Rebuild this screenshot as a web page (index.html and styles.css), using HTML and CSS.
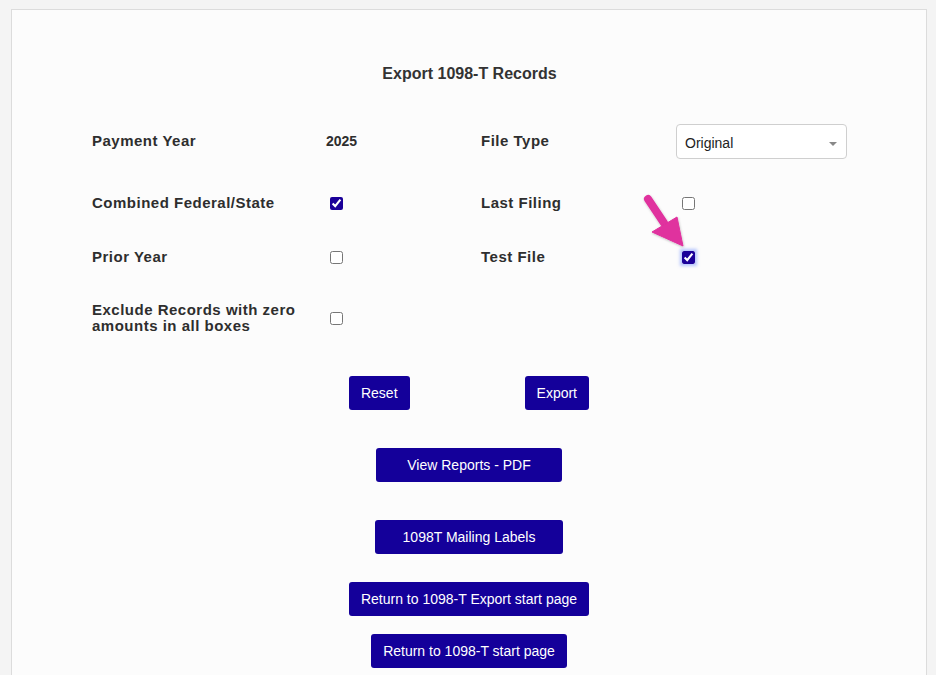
FILE: index.html
```html
<!DOCTYPE html>
<html lang="en">
<head>
<meta charset="utf-8">
<title>Export 1098-T Records</title>
<link rel="stylesheet" href="styles.css">
</head>
<body>
<div class="card">
  <h1 class="title">Export 1098-T Records</h1>
  <div class="form">
    <div class="label">Payment Year</div>
    <div class="value">2025</div>
    <div class="label">File Type</div>
    <div class="value">
      <div class="select-wrap">
        <select class="select"><option>Original</option></select>
      </div>
    </div>

    <div class="label">Combined Federal/State</div>
    <div class="value"><input type="checkbox" class="check" checked></div>
    <div class="label">Last Filing</div>
    <div class="value"><input type="checkbox" class="check"></div>

    <div class="label">Prior Year</div>
    <div class="value"><input type="checkbox" class="check"></div>
    <div class="label">Test File</div>
    <div class="value"><input type="checkbox" class="check check-focus" checked></div>

    <div class="label">Exclude Records with zero amounts in all boxes</div>
    <div class="value"><input type="checkbox" class="check"></div>
    <div></div>
    <div></div>
  </div>

  <div class="actions">
    <div class="pair">
      <button class="btn">Reset</button>
      <button class="btn">Export</button>
    </div>
    <button class="btn btn-reports">View Reports - PDF</button>
    <button class="btn btn-labels">1098T Mailing Labels</button>
    <button class="btn btn-return">Return to 1098-T Export start page</button>
    <button class="btn btn-start">Return to 1098-T start page</button>
  </div>

  <svg class="pointer" width="50" height="60" viewBox="0 0 50 60" aria-hidden="true">
    <defs>
      <filter id="sh" x="-30%" y="-30%" width="160%" height="160%">
        <feDropShadow dx="0.5" dy="1" stdDeviation="1" flood-color="#000" flood-opacity="0.25"/>
      </filter>
    </defs>
    <g filter="url(#sh)" fill="#e0309e" stroke="#e0309e">
      <line x1="6" y1="7" x2="22" y2="31" stroke-width="8" stroke-linecap="round"/>
      <polygon points="10,40 35,25 41,54" stroke-width="1" stroke-linejoin="round"/>
    </g>
  </svg>
</div>
</body>
</html>
```

FILE: styles.css
```css
html, body {
  margin: 0;
  padding: 0;
  background: #f4f4f4;
  font-family: "Liberation Sans", Arial, sans-serif;
  color: #333;
}

.card {
  position: relative;
  box-sizing: border-box;
  width: 916px;
  min-height: 700px;
  margin: 9px 0 0 11px;
  background: #fcfcfc;
  border: 1px solid #dcdcdc;
  padding: 56px 0 40px 0;
}

.title {
  margin: 0;
  text-align: center;
  font-size: 16px;
  line-height: 16px;
  font-weight: bold;
  color: #333;
  padding-left: 1px;
}

.form {
  display: grid;
  grid-template-columns: 234px 155px 197px 171px;
  grid-template-rows: 62px 62px 46px 76px;
  margin: 28px 0 0 80px;
  align-items: center;
}

.label {
  font-size: 15px;
  line-height: 16px;
  font-weight: bold;
  letter-spacing: 0.5px;
  color: #2e2e2e;
}

.form > .label:nth-child(4n+1) {
  padding-right: 20px;
}

.value {
  font-size: 14px;
  font-weight: bold;
  line-height: 16px;
  display: flex;
  align-items: center;
  color: #2e2e2e;
}

.check {
  width: 13px;
  height: 13px;
  margin: 0 0 0 4px;
  accent-color: #1a0099;
}

.check-focus {
  box-shadow: 0 0 3px 2px rgba(120, 150, 255, 0.55);
  border-radius: 2px;
}

.select-wrap {
  position: relative;
  margin-left: -2px;
}

.select-wrap::after {
  content: "";
  position: absolute;
  right: 10px;
  top: 18px;
  border-left: 4px solid transparent;
  border-right: 4px solid transparent;
  border-top: 4px solid #888;
}

.select {
  appearance: none;
  -webkit-appearance: none;
  box-sizing: border-box;
  width: 171px;
  height: 35px;
  padding: 4px 24px 0 8px;
  background: #fff;
  border: 1px solid #cfcfcf;
  border-radius: 4px;
  font-family: "Liberation Sans", Arial, sans-serif;
  font-size: 14px;
  font-weight: normal;
  color: #222;
}

.actions {
  display: flex;
  flex-direction: column;
  align-items: center;
  margin-top: 20px;
}

.pair {
  display: flex;
  gap: 115px;
}

.btn {
  box-sizing: border-box;
  height: 34px;
  padding: 0 12px;
  background: #14009a;
  color: #fff;
  border: none;
  border-radius: 3px;
  font-family: "Liberation Sans", Arial, sans-serif;
  font-size: 14px;
  white-space: nowrap;
  cursor: pointer;
}

.btn-reports {
  width: 186px;
  margin-top: 38px;
}

.btn-labels {
  width: 188px;
  margin-top: 38px;
}

.btn-return {
  min-width: 240px;
  margin-top: 28px;
}

.btn-start {
  min-width: 196px;
  margin-top: 18px;
}

.pointer {
  position: absolute;
  left: 630px;
  top: 182px;
}
```
